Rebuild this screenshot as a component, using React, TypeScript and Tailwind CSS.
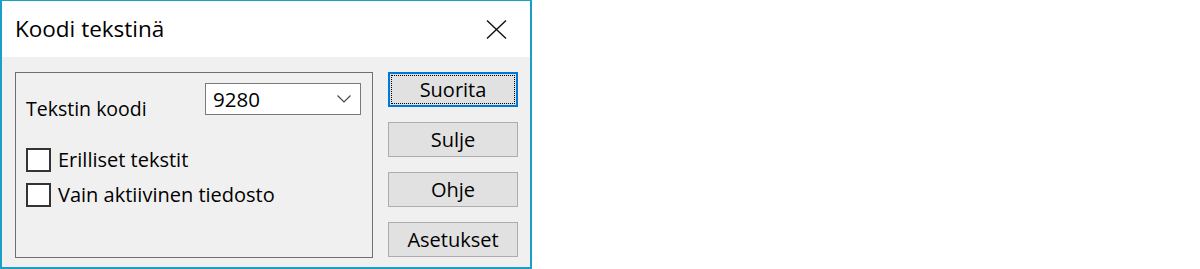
import React from 'react';

const BUTTONS = ['Suorita', 'Sulje', 'Ohje', 'Asetukset'];

const CHECKS = ['Erilliset tekstit', 'Vain aktiivinen tiedosto'];

function Checkbox({ label }: { label: string }) {
    return (
        <div className="flex items-center h-[24px]">
            <div className="w-[25px] h-[24px] border-2 border-[#333333] bg-white shrink-0"></div>
            <span className="ml-[7px] text-[20px] leading-[24px] text-black">{label}</span>
        </div>
    );
}

export default function App() {
    return (
        <div className="w-[1200px] h-[269px] bg-white" style={{ fontFamily: '"Open Sans", "Noto Sans", sans-serif' }}>
            <div className="w-[532px] h-[269px] border-t border-x-2 border-b-2 border-[#1aa0c6] flex flex-col">
                {/* Title bar */}
                <div className="h-[56px] bg-white flex items-center justify-between pl-[13px] pr-[23px] shrink-0">
                    <span className="text-[22.5px] leading-none text-black pt-[1px]">Koodi tekstinä</span>
                    <svg width="21" height="19" viewBox="0 0 21 19" className="mt-[1px]">
                        <path d="M1 0.5 L20 18.5 M20 0.5 L1 18.5" stroke="#111" strokeWidth="1.4" fill="none" />
                    </svg>
                </div>

                {/* Body */}
                <div className="flex-1 bg-[#f0f0f0] flex pl-[13px] pt-[15px]">
                    <div className="w-[358px] h-[186px] border border-[#707070] pl-[10px] pt-[10px]">
                        <div className="flex items-start">
                            <span className="w-[179px] mt-[14px] text-[19.5px] leading-[24px] text-black">Tekstin koodi</span>
                            <div className="w-[156px] h-[32px] border border-[#7a7a7a] bg-white flex items-center justify-between pl-[7px] pr-[9px]">
                                <span className="text-[20.5px] leading-none text-black">9280</span>
                                <svg width="14" height="8" viewBox="0 0 14 8">
                                    <path d="M0.5 0.5 L7 7 L13.5 0.5" stroke="#444" strokeWidth="1.1" fill="none" />
                                </svg>
                            </div>
                        </div>
                        <div className="flex flex-col gap-[11px] mt-[27px]">
                            {CHECKS.map((c) => (
                                <Checkbox key={c} label={c} />
                            ))}
                        </div>
                    </div>

                    <div className="flex flex-col gap-[15px] ml-[15px]">
                        {BUTTONS.map((b, i) => (
                            <div
                                key={b}
                                className={`w-[130px] h-[35px] bg-[#e1e1e1] flex items-center justify-center ${i === 0 ? 'border-2 border-[#0078d7] p-[1px]' : 'border border-[#adadad]'}`}
                            >
                                {i === 0 ? (
                                    <div className="w-full h-full border border-dotted border-black flex items-center justify-center">
                                        <span className="text-[20px] leading-none text-black">{b}</span>
                                    </div>
                                ) : (
                                    <span className="text-[20px] leading-none text-black">{b}</span>
                                )}
                            </div>
                        ))}
                    </div>
                </div>
            </div>
        </div>
    );
}
